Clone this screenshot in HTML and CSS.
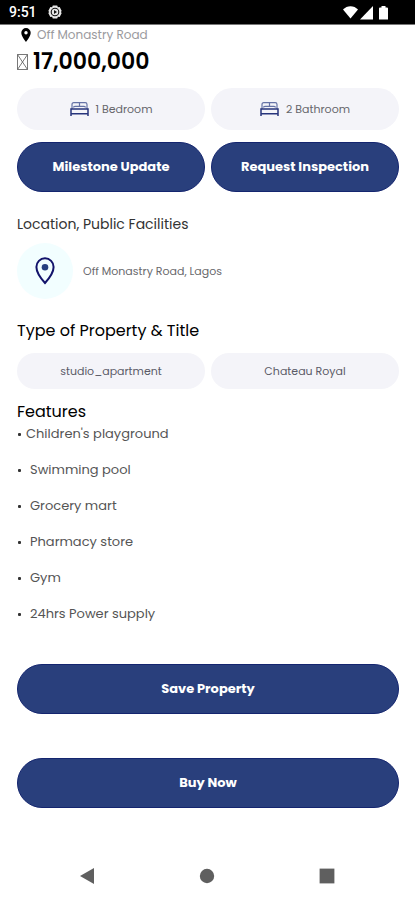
FILE: index.html
```html
<!DOCTYPE html>
<html lang="en">
<head>
<meta charset="utf-8">
<meta name="viewport" content="width=device-width, initial-scale=1">
<title>Property</title>
<link rel="stylesheet" href="styles.css">
</head>
<body>
<div class="screen">
  <header class="status">
    <span class="clock">9:51</span>
    <svg class="gear" viewBox="0 0 14 14" aria-hidden="true"><path d="M4.800.500h4.400l.7 1.700 1.800-.1L13.700 6l-.9 1 .9 1-2 3.900-1.800-.1-.7 1.700H4.800l-.7-1.700-1.800.1L.3 8l.9-1-.9-1 2-3.900 1.800.1z" fill="#e8e8e8"/><circle cx="7" cy="7" r="3.800" fill="none" stroke="#111" stroke-width="1.100"/><path d="M6 5 9 7 6 9z" fill="#111"/></svg>
    <svg class="signals" viewBox="0 0 46 16" aria-hidden="true"><path d="M0 5.500C4 1 11 1 15 5.500L7.500 14.500z" fill="#fff"/><path d="M17 15.500 30 2v13.500z" fill="#fff"/><path d="M36 4.500Q36 3.500 37 3.500h1.500V2h4v1.500H44q1 0 1 1v11h-9z" fill="#fff"/></svg>
  </header>

  <main class="content">
    <p class="address">
      <svg class="pin" viewBox="0 0 10 14" aria-hidden="true"><path d="M5 0a4.700 4.700 0 0 0-4.700 4.700C.3 8.300 5 14 5 14s4.700-5.700 4.700-9.300A4.700 4.700 0 0 0 5 0z" fill="#000"/><circle cx="5" cy="4.700" r="1.700" fill="#fff"/></svg>
      <span>Off Monastry Road</span>
    </p>
    <h1 class="price">
      <svg class="glyph" viewBox="0 0 11 16" aria-hidden="true"><path d="M.5.500h10v15H.5zL10.500 15.500M10.500.500.5 15.500" fill="none" stroke="#555" stroke-width=".8"/></svg>
      <span>17,000,000</span>
    </h1>

    <div class="pair rooms">
      <div class="chip">
        <svg class="bed" viewBox="0 0 19 14" aria-hidden="true"><path d="M2 7V2.500Q2 .7 3.800.700h11.400q1.800 0 1.800 1.800V7M9.500.700V4.500M3.500 5.500Q3.500 4.300 5 4.300h9q1.500 0 1.500 1.200" fill="none" stroke="#6673a6" stroke-width="1.200"/><path d="M1 14V7h17v7M1 11.700h17" fill="none" stroke="#27347c" stroke-width="1.500"/></svg>
        <span>1 Bedroom</span>
      </div>
      <div class="chip">
        <svg class="bed" viewBox="0 0 19 14" aria-hidden="true"><path d="M2 7V2.500Q2 .7 3.800.700h11.400q1.800 0 1.800 1.800V7M9.500.700V4.500M3.500 5.500Q3.500 4.300 5 4.300h9q1.500 0 1.500 1.200" fill="none" stroke="#6673a6" stroke-width="1.200"/><path d="M1 14V7h17v7M1 11.700h17" fill="none" stroke="#27347c" stroke-width="1.500"/></svg>
        <span>2 Bathroom</span>
      </div>
    </div>
    <div class="pair actions">
      <button class="btn" type="button">Milestone Update</button>
      <button class="btn" type="button">Request Inspection</button>
    </div>

    <h2 class="heading small">Location, Public Facilities</h2>
    <div class="place">
      <span class="disc"><svg viewBox="0 0 20 28" aria-hidden="true"><path d="M10 1.300A8.600 8.600 0 0 0 1.400 10C1.400 16.500 10 26 10 26s8.600-9.500 8.600-16A8.600 8.600 0 0 0 10 1.300z" fill="none" stroke="#13136b" stroke-width="2"/><circle cx="10" cy="10.200" r="3.300" fill="#263f80"/></svg></span>
      <span>Off Monastry Road, Lagos</span>
    </div>

    <h2 class="heading">Type of Property &amp; Title</h2>
    <div class="pair types">
      <div class="chip low">studio_apartment</div>
      <div class="chip low">Chateau Royal</div>
    </div>

    <h2 class="heading features-title">Features</h2>
    <ul class="features">
      <li class="first">Children's playground</li>
      <li>Swimming pool</li>
      <li>Grocery mart</li>
      <li>Pharmacy store</li>
      <li>Gym</li>
      <li>24hrs Power supply</li>
    </ul>

    <div class="final">
      <button class="btn" type="button">Save Property</button>
      <button class="btn" type="button">Buy Now</button>
    </div>
  </main>

  <nav class="system">
    <button type="button" aria-label="Back"><svg viewBox="0 0 16 16" aria-hidden="true"><path d="M0 8 14 0v16z" fill="#5f5f5f"/></svg></button>
    <button type="button" aria-label="Home"><svg viewBox="0 0 16 16" aria-hidden="true"><circle cx="8" cy="8" r="7.200" fill="#5f5f5f"/></svg></button>
    <button type="button" aria-label="Recents"><svg viewBox="0 0 16 16" aria-hidden="true"><path d="M.6.600h14.800v14.800H.6z" fill="#5f5f5f"/></svg></button>
  </nav>
</div>
</body>
</html>
```
FILE: styles.css
```css
* { box-sizing: border-box; }
body {
  margin: 0;
  background: #fff;
  color: #1a1a1a;
  font-family: Poppins, Inter, "Open Sans", sans-serif;
}
h1, h2, p, ul { margin: 0; padding: 0; font-weight: 400; }
svg { display: block; flex: none; }
button { font-family: inherit; border: 0; padding: 0; cursor: pointer; }

.screen { min-height: 100vh; display: flex; flex-direction: column; }

.status {
  height: 25px;
  padding: 0 26px 0 9px;
  display: flex;
  align-items: center;
  gap: 11px;
  background: #000;
  border-bottom: 1px solid #777;
  color: #fff;
}
.clock { font: 500 14px/24px Roboto, sans-serif; }
.gear { width: 14px; height: 14px; }
.signals { width: 46px; height: 16px; margin-left: auto; }

.content { padding: 0 16px 0 17px; }

.address {
  display: flex;
  align-items: center;
  gap: 6px;
  padding-left: 4px;
  font-size: 12px;
  line-height: 20px;
  color: #9a9a9e;
}
.pin { width: 10px; height: 14px; }
.price {
  display: flex;
  align-items: center;
  gap: 5px;
  font-size: 22px;
  line-height: 33px;
  font-weight: 600;
  color: #000;
}
.glyph { width: 11px; height: 16px; }

.pair { display: grid; grid-template-columns: 1fr 1fr; gap: 6px; }
.rooms { margin-top: 10px; }
.actions { margin-top: 12px; }
.types { margin-top: 10px; }
.chip {
  min-height: 42px;
  display: flex;
  align-items: center;
  justify-content: center;
  gap: 7px;
  border-radius: 24px;
  background: #f4f4f9;
  color: #66666c;
  font-size: 11px;
}
.low { min-height: 36px; color: #5b5b68; }
.bed { width: 19px; height: 14px; }

.btn {
  min-height: 50px;
  border: 1px solid #14256f;
  border-radius: 25px;
  background: #293f7c;
  color: #fff;
  font-size: 13px;
  font-weight: 700;
}

.heading {
  margin-top: 20px;
  font-size: 16px;
  line-height: 24px;
  color: #000;
}
.small { font-size: 14px; color: #333; }
.place {
  margin-top: 7px;
  display: flex;
  align-items: center;
  gap: 10px;
  font-size: 11px;
  color: #68686c;
}
.disc {
  width: 56px;
  height: 56px;
  display: grid;
  place-items: center;
  border-radius: 50%;
  background: #f2feff;
}
.disc svg { width: 20px; height: 28px; }

.features-title { margin-top: 11px; }
.features {
  list-style: none;
  display: grid;
  gap: 16px;
  font-size: 13px;
  line-height: 20px;
  color: #555;
}
.features li { display: flex; align-items: center; gap: 9px; }
.features li::before {
  content: "";
  width: 3px;
  height: 3px;
  margin-left: 1px;
  border-radius: 1px;
  background: #333;
}
.features .first { gap: 5px; }

.final { margin-top: 40px; display: grid; gap: 44px; }

.system {
  margin-top: auto;
  height: 48px;
  padding: 0 28px;
  display: grid;
  grid-template-columns: repeat(3, 1fr);
}
.system button { display: grid; place-items: center; background: none; }
.system svg { width: 16px; height: 16px; }
```
